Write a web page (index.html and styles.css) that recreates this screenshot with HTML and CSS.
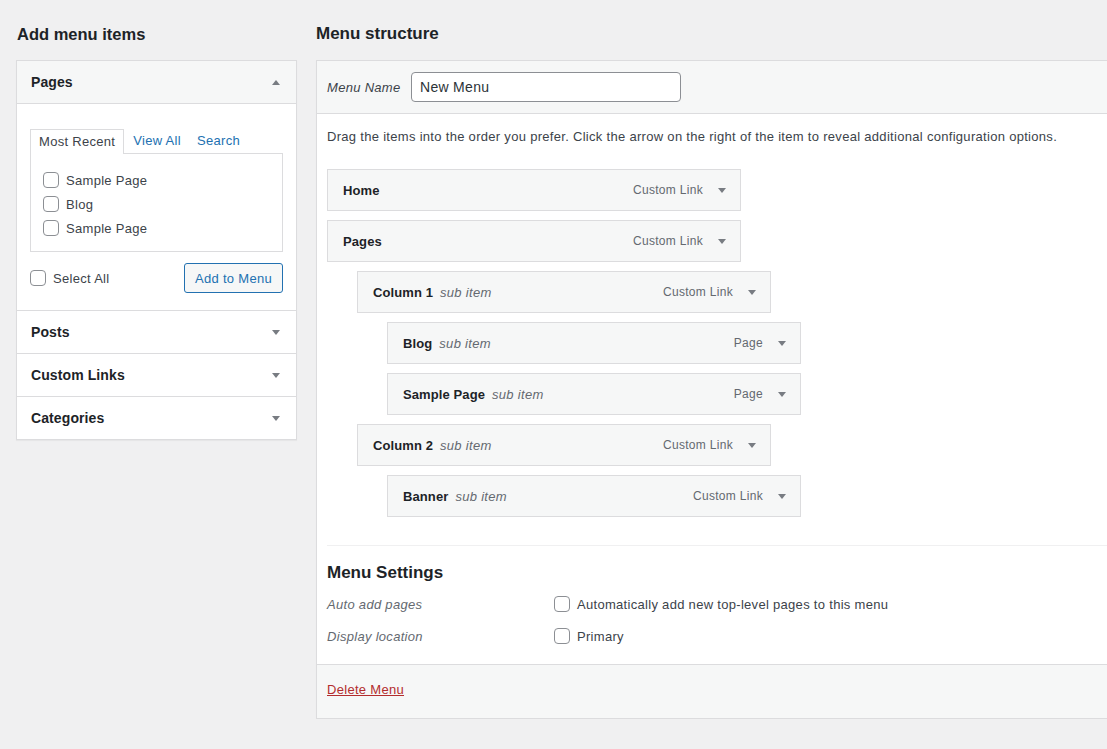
FILE: index.html
```html
<!DOCTYPE html>
<html lang="en">
  <head>
    <meta charset="UTF-8" />
    <meta name="viewport" content="width=device-width, initial-scale=1.0" />
    <title>Menus</title>
    <link rel="stylesheet" href="styles.css">
  </head>
  <body>
    <div class="wrap">
      <!-- left column: accordion of sources -->
      <div class="col-left">
        <h2 class="col-title">Add menu items</h2>
        <div class="accordion">
          <div class="acc-section open">
            <div class="acc-title">
              <span>Pages</span>
              <svg class="caret" width="8" height="5" viewBox="0 0 8 5"><path d="M0 5 L4 0 L8 5 Z" /></svg>
            </div>
            <div class="acc-content">
              <ul class="tabs">
                <li class="tab active">Most Recent</li>
                <li class="tab"><a href="#">View All</a></li>
                <li class="tab"><a href="#">Search</a></li>
              </ul>
              <div class="tab-panel">
                <label class="check-row"><input type="checkbox" class="check" /> Sample Page</label>
                <label class="check-row"><input type="checkbox" class="check" /> Blog</label>
                <label class="check-row"><input type="checkbox" class="check" /> Sample Page</label>
              </div>
              <div class="panel-actions">
                <label class="check-row select-all"><input type="checkbox" class="check" /> Select All</label>
                <button class="button">Add to Menu</button>
              </div>
            </div>
          </div>
          <div class="acc-section">
            <div class="acc-title">
              <span>Posts</span>
              <svg class="caret" width="8" height="5" viewBox="0 0 8 5"><path d="M0 0 L8 0 L4 5 Z" /></svg>
            </div>
          </div>
          <div class="acc-section">
            <div class="acc-title">
              <span>Custom Links</span>
              <svg class="caret" width="8" height="5" viewBox="0 0 8 5"><path d="M0 0 L8 0 L4 5 Z" /></svg>
            </div>
          </div>
          <div class="acc-section">
            <div class="acc-title">
              <span>Categories</span>
              <svg class="caret" width="8" height="5" viewBox="0 0 8 5"><path d="M0 0 L8 0 L4 5 Z" /></svg>
            </div>
          </div>
        </div>
      </div>

      <!-- right column: the menu being edited -->
      <div class="col-right">
        <h2 class="col-title">Menu structure</h2>
        <div class="menu-edit">
          <div class="menu-header">
            <label class="menu-name-label" for="menuName">Menu Name</label>
            <input id="menuName" class="menu-name" type="text" value="New Menu" />
          </div>
          <div class="menu-body">
            <p class="hint">Drag the items into the order you prefer. Click the arrow on the right of the item to reveal additional configuration options.</p>
            <ul class="menu-items">
              <li class="menu-item depth-0"><span class="item-title">Home</span><span class="item-type">Custom Link</span><svg class="caret" width="8" height="5" viewBox="0 0 8 5"><path d="M0 0 L8 0 L4 5 Z" /></svg></li>
              <li class="menu-item depth-0"><span class="item-title">Pages</span><span class="item-type">Custom Link</span><svg class="caret" width="8" height="5" viewBox="0 0 8 5"><path d="M0 0 L8 0 L4 5 Z" /></svg></li>
              <li class="menu-item depth-1"><span class="item-title">Column 1</span><span class="sub">sub item</span><span class="item-type">Custom Link</span><svg class="caret" width="8" height="5" viewBox="0 0 8 5"><path d="M0 0 L8 0 L4 5 Z" /></svg></li>
              <li class="menu-item depth-2"><span class="item-title">Blog</span><span class="sub">sub item</span><span class="item-type">Page</span><svg class="caret" width="8" height="5" viewBox="0 0 8 5"><path d="M0 0 L8 0 L4 5 Z" /></svg></li>
              <li class="menu-item depth-2"><span class="item-title">Sample Page</span><span class="sub">sub item</span><span class="item-type">Page</span><svg class="caret" width="8" height="5" viewBox="0 0 8 5"><path d="M0 0 L8 0 L4 5 Z" /></svg></li>
              <li class="menu-item depth-1"><span class="item-title">Column 2</span><span class="sub">sub item</span><span class="item-type">Custom Link</span><svg class="caret" width="8" height="5" viewBox="0 0 8 5"><path d="M0 0 L8 0 L4 5 Z" /></svg></li>
              <li class="menu-item depth-2"><span class="item-title">Banner</span><span class="sub">sub item</span><span class="item-type">Custom Link</span><svg class="caret" width="8" height="5" viewBox="0 0 8 5"><path d="M0 0 L8 0 L4 5 Z" /></svg></li>
            </ul>

            <div class="menu-settings">
              <h3>Menu Settings</h3>
              <div class="setting-row">
                <span class="setting-label">Auto add pages</span>
                <label class="check-row"><input type="checkbox" class="check" /> Automatically add new top-level pages to this menu</label>
              </div>
              <div class="setting-row">
                <span class="setting-label">Display location</span>
                <label class="check-row"><input type="checkbox" class="check" /> Primary</label>
              </div>
            </div>
          </div>
          <div class="menu-footer">
            <a href="#" class="delete">Delete Menu</a>
          </div>
        </div>
      </div>
    </div>
  </body>
</html>
```

FILE: styles.css
```css
html, body {
  margin: 0;
  background-color: #f0f0f1;
  font-family: "Liberation Sans", Arial, sans-serif;
  font-size: 13px;
  letter-spacing: 0.3px;
  color: #3c434a;
  overflow: hidden;
}

.wrap {
  display: flex;
  gap: 19px;
  padding-left: 16px;
  width: 1200px;
}

.col-left {
  width: 281px;
  flex: none;
}

.col-right {
  width: 860px;
  flex: none;
}

.col-title {
  margin: 0;
  padding-top: 24px;
  height: 60px;
  box-sizing: border-box;
  font-size: 17px;
  line-height: 20px;
  font-weight: 600;
  letter-spacing: 0;
  color: #1d2327;
}

.col-left .col-title {
  padding-left: 1px;
  font-size: 16.5px;
}

/* accordion */
.accordion {
  background-color: #fff;
  border: 1px solid #dcdcde;
  box-shadow: 0 1px 1px rgba(0, 0, 0, 0.04);
}

.acc-section + .acc-section {
  border-top: 1px solid #dcdcde;
}

.acc-title {
  height: 42px;
  padding: 0 16px 0 14px;
  display: flex;
  align-items: center;
  justify-content: space-between;
  font-size: 14px;
  font-weight: 600;
  letter-spacing: 0.1px;
  color: #1d2327;
}

.open .acc-title {
  background-color: #f6f7f7;
  border-bottom: 1px solid #dcdcde;
}

.caret {
  fill: #787c82;
  flex: none;
}

.acc-content {
  padding: 25px 13px 17px 13px;
}

.tabs {
  list-style: none;
  margin: 0;
  padding: 0;
  display: flex;
  height: 24px;
}

.tab {
  padding: 0 8px;
  line-height: 24px;
  box-sizing: border-box;
}

.tab.active {
  border: 1px solid #dcdcde;
  border-bottom: none;
  background-color: #fff;
  height: 25px;
  color: #3c434a;
  margin-right: 1px;
  line-height: 23px;
}

.tab a {
  color: #2271b1;
  text-decoration: none;
}

.tab-panel {
  border: 1px solid #dcdcde;
  padding: 14px 12px 11px 12px;
  display: flex;
  flex-direction: column;
}

.check-row {
  display: flex;
  align-items: center;
  gap: 7px;
  height: 24px;
  color: #3c434a;
  font-size: 13px;
}

.check {
  appearance: none;
  -webkit-appearance: none;
  margin: 0;
  width: 16px;
  height: 16px;
  border: 1px solid #8c8f94;
  border-radius: 4px;
  background-color: #fff;
  flex: none;
}

.panel-actions {
  display: flex;
  align-items: center;
  justify-content: space-between;
  margin-top: 11px;
}

.button {
  height: 30px;
  padding: 0 10px;
  border: 1px solid #2271b1;
  border-radius: 3px;
  background-color: #f6f7f7;
  color: #2271b1;
  font-family: inherit;
  font-size: 13px;
  letter-spacing: 0.3px;
  cursor: pointer;
}

/* menu editor */
.menu-edit {
  background-color: #fff;
  border: 1px solid #dcdcde;
  border-right: none;
  box-shadow: 0 1px 1px rgba(0, 0, 0, 0.04);
}

.menu-header {
  height: 53px;
  box-sizing: border-box;
  background-color: #f6f7f7;
  border-bottom: 1px solid #dcdcde;
  display: flex;
  align-items: center;
  padding-left: 10px;
  gap: 11px;
}

.menu-name-label {
  font-style: italic;
  color: #3c434a;
  width: 73px;
  flex: none;
  white-space: nowrap;
}

.menu-name {
  width: 270px;
  height: 30px;
  flex: none;
  box-sizing: border-box;
  border: 1px solid #8c8f94;
  border-radius: 4px;
  padding: 0 8px;
  font-family: inherit;
  font-size: 14px;
  letter-spacing: 0.3px;
  color: #2c3338;
}

.menu-body {
  padding: 0 0 0 10px;
}

.hint {
  margin: 13px 0 22px 0;
  line-height: 20px;
}

.menu-items {
  list-style: none;
  margin: 0;
  padding: 0;
}

.menu-item {
  width: 414px;
  height: 42px;
  box-sizing: border-box;
  border: 1px solid #dcdcde;
  background-color: #f6f7f7;
  display: flex;
  align-items: center;
  padding: 0 14px 0 15px;
  margin-bottom: 9px;
}

.depth-1 {
  margin-left: 30px;
}

.depth-2 {
  margin-left: 60px;
}

.item-title {
  font-weight: 600;
  letter-spacing: 0.1px;
  color: #1d2327;
}

.sub {
  font-style: italic;
  color: #646970;
  margin-left: 7px;
}

.item-type {
  margin-left: auto;
  margin-right: 15px;
  font-size: 12px;
  color: #646970;
}

.menu-settings {
  border-top: 1px solid #f0f0f1;
  margin-top: 28px;
  padding-bottom: 12px;
}

.menu-settings h3 {
  margin: 17px 0 5px 0;
  font-size: 17px;
  line-height: 20px;
  font-weight: 600;
  letter-spacing: 0;
  color: #1d2327;
}

.setting-row {
  display: flex;
  align-items: center;
  height: 32px;
}

.setting-label {
  width: 227px;
  font-style: italic;
  color: #646970;
}

.menu-footer {
  height: 54px;
  box-sizing: border-box;
  background-color: #f6f7f7;
  border-top: 1px solid #dcdcde;
  display: flex;
  align-items: center;
  padding: 0 0 5px 10px;
}

.delete {
  color: #b32d2e;
  text-decoration: underline;
}
```
